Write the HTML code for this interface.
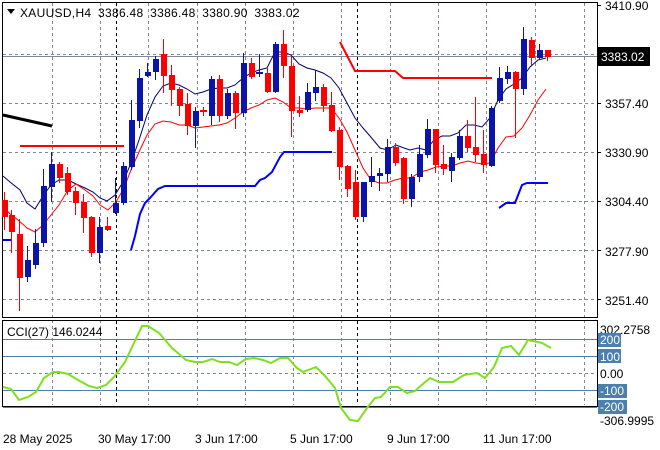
<!DOCTYPE html>
<html><head><meta charset="utf-8"><style>
html,body{margin:0;padding:0;background:#fff;}
svg{display:block;font-family:"Liberation Sans",sans-serif;font-size:12px;}
</style></head><body>
<svg width="660" height="450" viewBox="0 0 660 450" xmlns="http://www.w3.org/2000/svg">
<rect width="660" height="450" fill="#fff"/>
<g stroke="#7c8895" stroke-width="1" stroke-dasharray="3,3" fill="none">
<path d="M3 54.5H597M3 103.5H597M3 152.5H597M3 201.5H597M3 250.5H597M3 299.5H597"/>
<path d="M52.5 3V317M100.5 3V317M148.5 3V317M197.5 3V317M245.5 3V317M293.5 3V317M341.5 3V317M390.5 3V317M438.5 3V317M486.5 3V317M535.5 3V317M584.5 3V317"/>
<path d="M52.5 320V405M100.5 320V405M148.5 320V405M197.5 320V405M245.5 320V405M293.5 320V405M341.5 320V405M390.5 320V405M438.5 320V405M486.5 320V405M535.5 320V405M584.5 320V405"/>
<path d="M3 373.5H597"/>
</g>
<g stroke="#000" stroke-dasharray="3,3"><path d="M116.5 3V405M357.5 3V405"/></g>
<g stroke="#4a7fb0" stroke-width="1"><path d="M3 339.5H597M3 356.5H597M3 390.5H597M3 407.5H597"/></g>
<path d="M3 56.5H597" stroke="#7a8a98" stroke-width="1"/>
<g fill="none" stroke="#000" stroke-width="1">
<rect x="2.5" y="2.5" width="595" height="315"/>
<rect x="2.5" y="320.5" width="595" height="86"/>
</g>
<path d="M3 115L52 126" stroke="#000" stroke-width="3"/>
<path d="M20 146H124" stroke="#f00" stroke-width="2"/>
<path d="M340 42L355 71H395L403 78H492" stroke="#f00" stroke-width="2" fill="none"/>
<g stroke="#0000ff" stroke-width="2" fill="none">
<path d="M3 240H12"/>
<path d="M131 250L135 236L140 214L145 203L150 198L158 189L165 186H255L260 180L265 178L272 172L280 157L284 152H332"/>
<path d="M499 208L506 203H515L522 185L527 183H548"/>
</g>
<path fill="none" stroke="#00006e" stroke-width="1" d="M3 176L10 182L20 190L27 203L35 209L43 196L51 185L59 180L68 180L76 184L85 188L93 192L100 198L107 201L115 195L123 182L131 163L139 140L147 115L155 97L163 86L171 83L179 85L187 89L195 94L203 92L211 89L219 88L227 88L235 85L243 78L251 73L259 70L267 68L275 52L283 52L291 55L299 64L307 68L315 70L323 73L331 78L339 88L347 103L355 118L363 128L370 136L380 148L387 150L396 145L404 148L410 150L418 148L426 150L434 140L442 136L450 136L458 133L466 125L474 125L482 127L490 118L498 100L506 89L514 84L522 78L530 67L538 60L546 58"/>
<path fill="none" stroke="#f00" stroke-width="1" d="M3 206L10 214L18 220L27 228L35 232L43 225L51 215L59 205L68 190L76 184L85 190L93 196L100 205L108 210L116 202L124 188L131 170L139 152L147 135L155 124L163 121L171 122L179 125L187 125L195 128L203 127L211 126L219 125L227 123L235 118L243 112L251 108L259 105L267 100L275 98L283 102L291 108L299 108L307 109L315 108L323 108L331 108L339 118L347 132L355 150L363 168L371 180L379 183L387 183L395 180L403 178L411 178L420 172L428 170L436 167L444 166L452 166L460 163L468 161L476 163L483 164L490 163L498 148L506 137L514 136L522 128L530 115L538 100L546 89"/>
<g stroke-width="1">
<g stroke="#f00" fill="#f00">
<path d="M4.5 192V230M11.5 210V253M19.5 219V311M59.5 162V183M67.5 167V195M75.5 187V215M83.5 194V233M91.5 216V257M107.5 217V231M163.5 39V93M171.5 65V106M179.5 87V116M187.5 93V135M203.5 107V116M219.5 75V122M235.5 91V129M251.5 58V79M267.5 68V93M283.5 30V78M291.5 57V137M299.5 96V117M323.5 84V112M331.5 92V132M339.5 127V180M347.5 165V197M355.5 170V220M395.5 143V166M403.5 157V204M435.5 129V173M443.5 145V175M467.5 120V152M475.5 97V162M483.5 130V173M515.5 71V138M531.5 37V65M547.5 50V61"/>
</g>
<g stroke="none" fill="#f00">
<rect x="2" y="200" width="6" height="17"/><rect x="9" y="215" width="6" height="17"/><rect x="17" y="234" width="6" height="44"/>
<rect x="57" y="164" width="6" height="14"/><rect x="65" y="173" width="6" height="19"/><rect x="73" y="191" width="6" height="12"/><rect x="81" y="202" width="6" height="16"/><rect x="89" y="217" width="6" height="36"/><rect x="105" y="226" width="6" height="4"/>
<rect x="161" y="54" width="6" height="22"/><rect x="169" y="75" width="6" height="15"/><rect x="177" y="89" width="6" height="17"/><rect x="185" y="104" width="6" height="22"/><rect x="200" y="110" width="7" height="2"/>
<rect x="217" y="79" width="6" height="37"/><rect x="233" y="93" width="6" height="20"/><rect x="249" y="63" width="6" height="14"/><rect x="265" y="73" width="6" height="19"/><rect x="281" y="44" width="6" height="22"/><rect x="289" y="66" width="6" height="45"/><rect x="297" y="110" width="6" height="3"/>
<rect x="321" y="87" width="6" height="19"/><rect x="329" y="105" width="6" height="26"/><rect x="337" y="130" width="6" height="37"/><rect x="345" y="166" width="6" height="23"/><rect x="353" y="182" width="6" height="35"/>
<rect x="393" y="147" width="6" height="16"/><rect x="401" y="158" width="6" height="41"/><rect x="433" y="129" width="6" height="36"/><rect x="441" y="164" width="6" height="5"/><rect x="465" y="136" width="6" height="12"/><rect x="473" y="147" width="6" height="8"/><rect x="481" y="154" width="6" height="11"/>
<rect x="513" y="72" width="6" height="17"/><rect x="529" y="40" width="6" height="18"/><rect x="545" y="50" width="6" height="7"/>
</g>
<g stroke="#0a14a8">
<path d="M27.5 246V282M35.5 229V269M43.5 169V247M51.5 152V202M99.5 217V263M115.5 178V214M123.5 162V205M131.5 100V170M139.5 69V128M147.5 63V77M155.5 56V80M195.5 107V148M211.5 76V125M227.5 89V119M243.5 53V117M259.5 54V77M275.5 42V93M307.5 83V112M315.5 70V101M363.5 182V222M371.5 157V187M379.5 168V191M387.5 139V182M411.5 174V207M419.5 145V182M427.5 119V158M451.5 153V182M459.5 130V160M491.5 106V167M499.5 67V103M507.5 66V84M523.5 27V95M539.5 44V59"/>
</g>
<g stroke="none" fill="#0a14a8">
<rect x="25" y="260" width="6" height="17"/><rect x="33" y="243" width="6" height="22"/><rect x="41" y="186" width="6" height="57"/><rect x="49" y="164" width="6" height="23"/>
<rect x="97" y="227" width="6" height="26"/><rect x="113" y="203" width="6" height="10"/><rect x="121" y="166" width="6" height="37"/><rect x="129" y="120" width="6" height="47"/><rect x="137" y="78" width="6" height="43"/><rect x="145" y="72" width="6" height="4"/><rect x="153" y="59" width="6" height="13"/>
<rect x="193" y="111" width="6" height="15"/><rect x="209" y="79" width="6" height="37"/><rect x="225" y="93" width="6" height="23"/><rect x="241" y="63" width="6" height="50"/><rect x="256" y="72" width="7" height="2"/><rect x="273" y="44" width="6" height="48"/>
<rect x="305" y="92" width="6" height="18"/><rect x="313" y="87" width="6" height="6"/><rect x="361" y="182" width="6" height="35"/><rect x="369" y="176" width="6" height="6"/><rect x="377" y="173" width="6" height="3"/><rect x="385" y="147" width="6" height="27"/>
<rect x="409" y="177" width="6" height="22"/><rect x="417" y="154" width="6" height="23"/><rect x="425" y="129" width="6" height="26"/><rect x="449" y="157" width="6" height="14"/><rect x="457" y="136" width="6" height="22"/>
<rect x="489" y="108" width="6" height="58"/><rect x="497" y="78" width="6" height="23"/><rect x="505" y="72" width="6" height="7"/><rect x="521" y="39" width="6" height="50"/><rect x="537" y="50" width="6" height="8"/>
</g>
</g>
<path fill="none" stroke="#7fe01e" stroke-width="2" d="M3 387L11 389L19 400L28 397L36 392L44 378L53 372L59 372L68 374L78 380L89 386L97 388L106 385L114 377L125 362L133 345L142 326L148 326L159 333L172 348L186 360L195 362L203 362L212 359L220 362L229 362L237 365L246 359L254 358L263 360L271 363L280 358L288 358L297 368L303 372L316 367L326 377L335 388L341 408L350 420L358 421L367 408L375 398L381 397L390 387L398 387L407 393L415 391L424 383L430 378L439 382L453 382L464 375L477 373L485 378L494 367L502 348L511 346L519 355L528 340L542 343L551 348"/>
<path d="M7 9H15L11 14Z" fill="#000"/>
<text x="20" y="17" fill="#000" letter-spacing="0.3" word-spacing="3">XAUUSD,H4  3386.48 3386.48 3380.90 3383.02</text>
<text x="7" y="336" fill="#000">CCI(27) 146.0244</text>
<g fill="#000">
<path d="M597 5.5H601M597 103.5H601M597 152.5H601M597 201.5H601M597 250.5H601M597 299.5H601" stroke="#000"/>
<text x="605" y="10">3410.90</text>
<text x="605" y="108">3357.40</text>
<text x="605" y="157">3330.90</text>
<text x="605" y="206">3304.40</text>
<text x="605" y="256">3277.90</text>
<text x="605" y="305">3251.40</text>
</g>
<rect x="598" y="47" width="52" height="19" fill="#000"/>
<text x="601" y="61" fill="#fff">3383.02</text>
<text x="600" y="334" fill="#000">302.2758</text>
<rect x="598" y="333" width="23" height="14" fill="#4a7fb0"/>
<text x="600" y="344" fill="#fff">200</text>
<rect x="598" y="349" width="23" height="14" fill="#4a7fb0"/>
<text x="600" y="361" fill="#fff">100</text>
<text x="600" y="378" fill="#000">0.00</text>
<rect x="598" y="384" width="29" height="14" fill="#4a7fb0"/>
<text x="600" y="395" fill="#fff">-100</text>
<rect x="598" y="400" width="29" height="14" fill="#4a7fb0"/>
<text x="600" y="411" fill="#fff">-200</text>
<text x="600" y="425" fill="#000">-306.9995</text>
<text x="3" y="443" fill="#000">28 May 2025</text>
<text x="98" y="443" fill="#000">30 May 17:00</text>
<text x="195" y="443" fill="#000">3 Jun 17:00</text>
<text x="290" y="443" fill="#000">5 Jun 17:00</text>
<text x="387" y="443" fill="#000">9 Jun 17:00</text>
<text x="483" y="443" fill="#000">11 Jun 17:00</text>
</svg>
</body></html>
